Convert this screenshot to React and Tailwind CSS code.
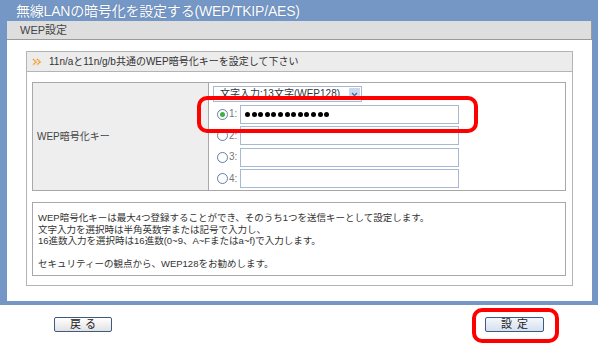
import React from 'react';

const jp = { fontFamily: '"Liberation Sans", "Noto Sans CJK JP", sans-serif' };

const Radio = ({ checked }) => (
    <span className="w-[11px] h-[11px] rounded-full border border-[#5f7fa8] bg-white flex items-center justify-center shrink-0">
        {checked && <span className="w-[5px] h-[5px] rounded-full bg-[#3cb043]" />}
    </span>
);

const KeyRow = ({ n, checked, dots }) => (
    <div className="flex items-center h-[19px]">
        <Radio checked={checked} />
        <span className="w-[11px] ml-[1px] text-[10px] text-[#777] leading-none">{n}:</span>
        <div className="w-[219px] h-[19px] border border-[#a6b8d2] bg-white flex items-center pl-[4px] gap-[1.6px]">
            {dots && Array.from({ length: 13 }).map((_, i) => (
                <span key={i} className="w-[5px] h-[5px] rounded-full bg-black" />
            ))}
        </div>
    </div>
);

const App = () => {
    return (
        <div className="w-[600px] h-[347px] bg-white relative text-[#333]" style={jp}>
            {/* blue frame */}
            <div className="w-[598px] bg-[#7597c6] pl-[7px] pr-[6px] pb-[4px]">
                <div className="h-[21px] pl-[9px] text-white text-[14px] leading-[22px] tracking-[-0.2px] [text-shadow:0_0_1px_#4a6a9a]">
                    無線LANの暗号化を設定する(WEP/TKIP/AES)
                </div>
                <div className="bg-white">
                    <div className="h-[19px] bg-[#dedede] border-r border-b border-[#9a9a9a] pl-[13px] text-[11px] leading-[19px] text-[#444]">
                        WEP設定
                    </div>
                    <div className="pt-[11px] px-[19px] pb-[15px]">
                        <div className="border border-[#b4b4b4] pb-[9px]">
                            {/* section header */}
                            <div className="h-[20px] bg-[#ececec] border-b border-[#b4b4b4] flex items-center pl-[5px] gap-[7px]">
                                <svg width="10" height="8" viewBox="0 0 10 8">
                                    <path d="M1 1l3 3-3 3M5 1l3 3-3 3" fill="none" stroke="#f39a1e" strokeWidth="1.6" strokeDasharray="1.4 0.6" />
                                </svg>
                                <span className="text-[10px] leading-none text-[#333]">11n/aと11n/g/b共通のWEP暗号化キーを設定して下さい</span>
                            </div>

                            <div className="pl-[5px] pr-[6px] pt-[10px] flex flex-col gap-[11px]">
                                {/* key table */}
                                <div className="flex border border-[#a8a8a8] h-[109px]">
                                    <div className="w-[176px] bg-[#eeeeee] border-r border-[#a8a8a8] flex items-center pl-[4px] text-[10px] text-[#444]">
                                        WEP暗号化キー
                                    </div>
                                    <div className="flex-1 pl-[4px] pt-[3px] flex flex-col gap-[2.5px]">
                                        <div className="w-[149px] h-[16px] border border-[#a6b8d2] bg-white flex items-center">
                                            <span className="flex-1 pl-[6px] text-[10px] leading-[14px] text-[#333] whitespace-nowrap">
                                                文字入力:13文字(WEP128)
                                            </span>
                                            <span className="w-[11px] h-[12px] mr-[1px] bg-[#c9d8ef] flex items-center justify-center">
                                                <svg width="7" height="5" viewBox="0 0 7 5">
                                                    <path d="M1 1l2.5 2.5L6 1" fill="none" stroke="#4d6a99" strokeWidth="1.3" />
                                                </svg>
                                            </span>
                                        </div>
                                        <div className="pl-[4px] flex flex-col gap-[2.5px]">
                                            <KeyRow n={1} checked dots />
                                            <KeyRow n={2} />
                                            <KeyRow n={3} />
                                            <KeyRow n={4} />
                                        </div>
                                    </div>
                                </div>

                                {/* info box */}
                                <div className="h-[74px] border border-[#a8a8a8] pl-[5px] pt-[9px] text-[9.5px] leading-[11.5px] text-[#333]">
                                    <p>WEP暗号化キーは最大4つ登録することができ、そのうち1つを送信キーとして設定します。</p>
                                    <p>文字入力を選択時は半角英数字または記号で入力し、</p>
                                    <p>16進数入力を選択時は16進数(0~9、A~Fまたはa~f)で入力します。</p>
                                    <p className="mt-[11.5px]">セキュリティーの観点から、WEP128をお勧めします。</p>
                                </div>
                            </div>
                        </div>
                    </div>
                </div>
            </div>

            {/* buttons */}
            <div className="flex justify-between pl-[54px] pr-[56px] pt-[12px]">
                <button className="w-[58px] h-[15px] border border-[#3d5a80] rounded-[2px] bg-gradient-to-b from-white to-[#e2e2e2] text-[11px] leading-none text-[#222] tracking-[4px] pl-[4px]">
                    戻る
                </button>
                <button className="w-[59px] h-[15px] border border-[#3d5a80] rounded-[2px] bg-gradient-to-b from-[#f4f7fc] to-[#d6e0ef] text-[11px] leading-none text-[#222] tracking-[5px] pl-[5px]">
                    設定
                </button>
            </div>

            {/* highlight marks */}
            <div className="absolute left-[197px] top-[96px] w-[281px] h-[37px] border-[4px] border-[#ff0000] rounded-[10px]" />
            <div className="absolute left-[472px] top-[308px] w-[87px] h-[35px] border-[4px] border-[#ff0000] rounded-[10px]" />
        </div>
    );
};

export default App;
